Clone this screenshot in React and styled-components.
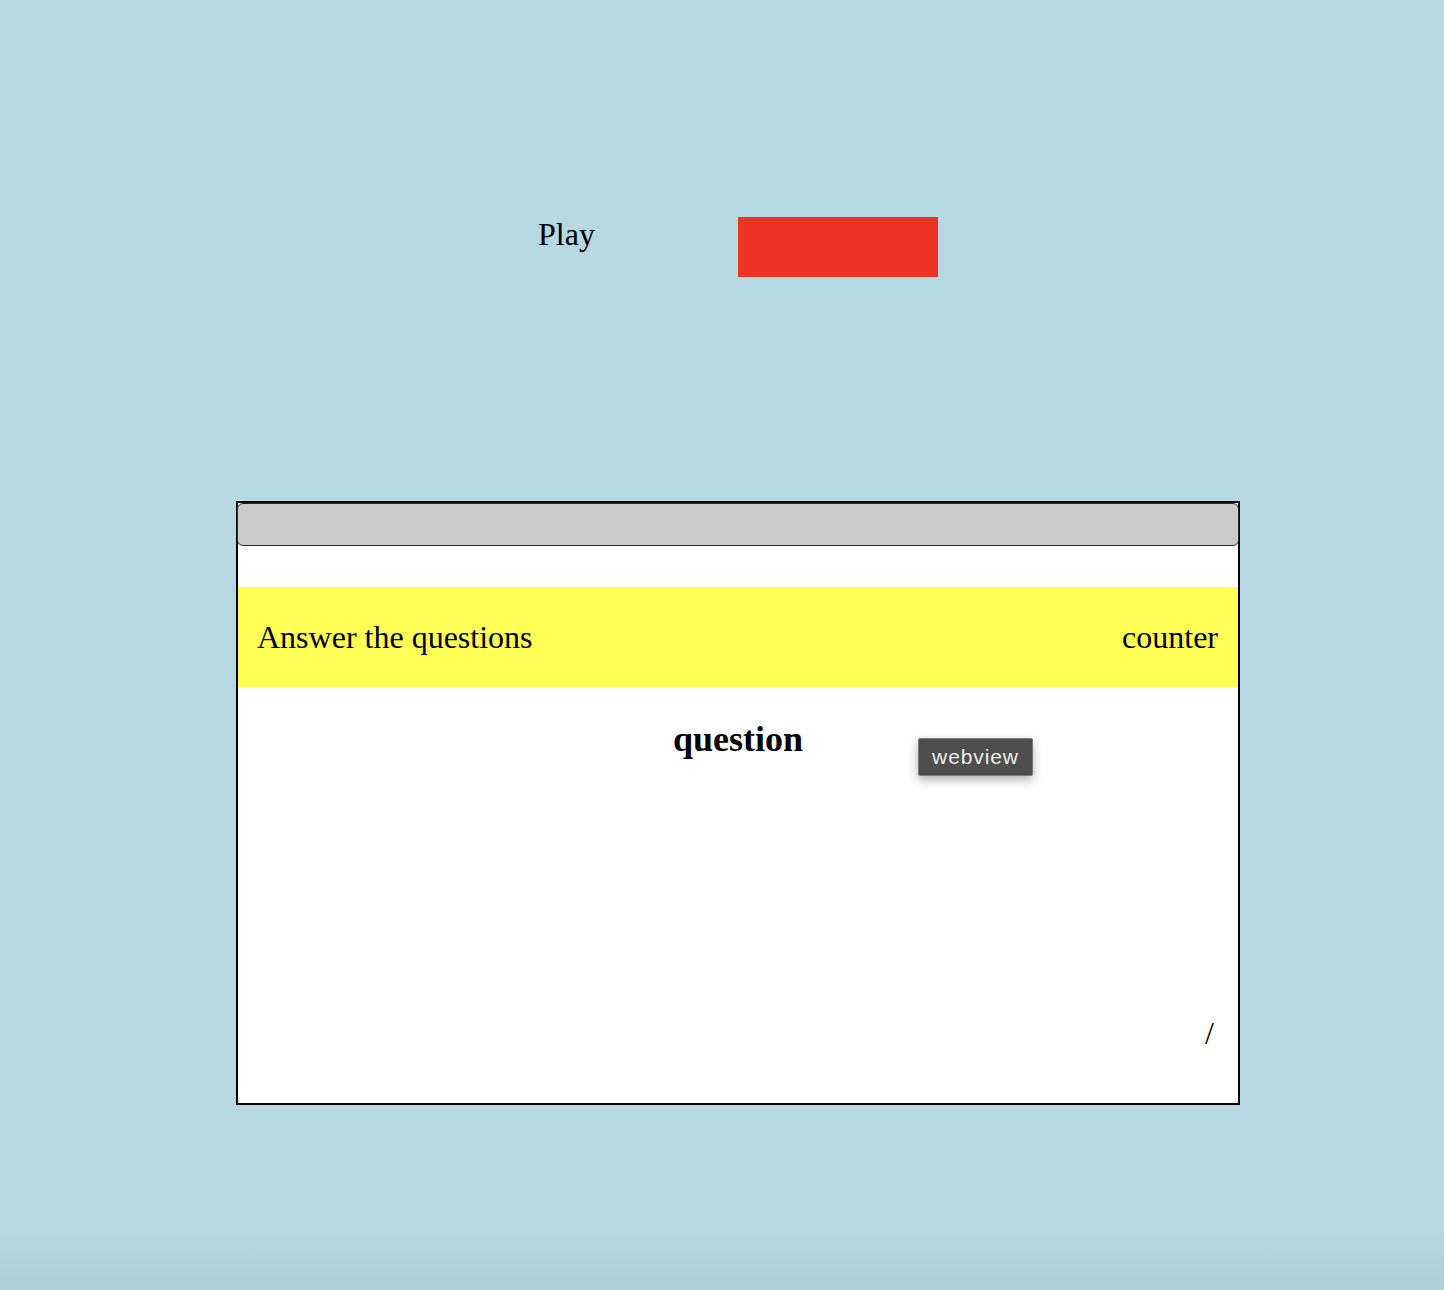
import React from "react";
import styled, { createGlobalStyle } from "styled-components";

const GlobalStyle = createGlobalStyle`
  html, body {
    margin: 0;
    padding: 0;
  }
  body {
    font-family: "Liberation Serif", "Times New Roman", serif;
    color: #000;
    background: linear-gradient(
      to bottom,
      #b6d8e3 0,
      #b6d8e3 1230px,
      #aecdd8 1290px
    );
    min-height: 1290px;
  }
`;

const Page = styled.div`
  min-height: 1290px;
  padding-top: 216px;
  box-sizing: border-box;
`;

const TopRow = styled.div`
  display: flex;
  align-items: flex-start;
  padding-left: 538px;
`;

const PlayLabel = styled.div`
  width: 200px;
  font-size: 32px;
  line-height: 37px;
`;

const RedBlock = styled.div`
  width: 200px;
  height: 60px;
  margin-top: 1px;
  background: #eb3323;
`;

const Panel = styled.section`
  position: relative;
  width: 1000px;
  height: 600px;
  margin: 224px 0 0 236px;
  border: 2px solid #000;
  background: #fff;
  display: flex;
  flex-direction: column;
`;

const TitleBar = styled.div`
  height: 43px;
  margin: 0 -1px;
  box-sizing: border-box;
  border: 1px solid #2e2e2e;
  border-radius: 6px;
  background: #cbcbcb;
`;

const Banner = styled.div`
  margin-top: 41px;
  height: 100px;
  padding: 0 20px 0 19px;
  background: #ffff55;
  display: flex;
  align-items: center;
  justify-content: space-between;
  font-size: 32px;
`;

const Question = styled.h2`
  margin: 32px 0 0;
  text-align: center;
  font-size: 36px;
  line-height: 41px;
  font-weight: bold;
`;

const Footer = styled.div`
  margin-top: auto;
  padding: 0 24px 51px 0;
  text-align: right;
  font-size: 32px;
  line-height: 37px;
`;

const Tooltip = styled.div`
  position: absolute;
  left: 680px;
  top: 235px;
  width: 115px;
  height: 38px;
  box-sizing: border-box;
  display: flex;
  align-items: center;
  justify-content: center;
  background: #4e4e4e;
  border: 1px solid #7a7a7a;
  border-radius: 2px;
  color: #ececec;
  font-family: "Liberation Sans", Arial, sans-serif;
  font-size: 21px;
  letter-spacing: 0.9px;
  box-shadow: 0 4px 10px rgba(0, 0, 0, 0.3);
`;

const App = () => {
  return (
    <>
      <GlobalStyle />
      <Page>
        <TopRow>
          <PlayLabel>Play</PlayLabel>
          <RedBlock />
        </TopRow>

        <Panel>
          <TitleBar />
          <Banner>
            <span>Answer the questions</span>
            <span>counter</span>
          </Banner>
          <Question>question</Question>
          <Footer>/</Footer>
          <Tooltip>webview</Tooltip>
        </Panel>
      </Page>
    </>
  );
};

export default App;
